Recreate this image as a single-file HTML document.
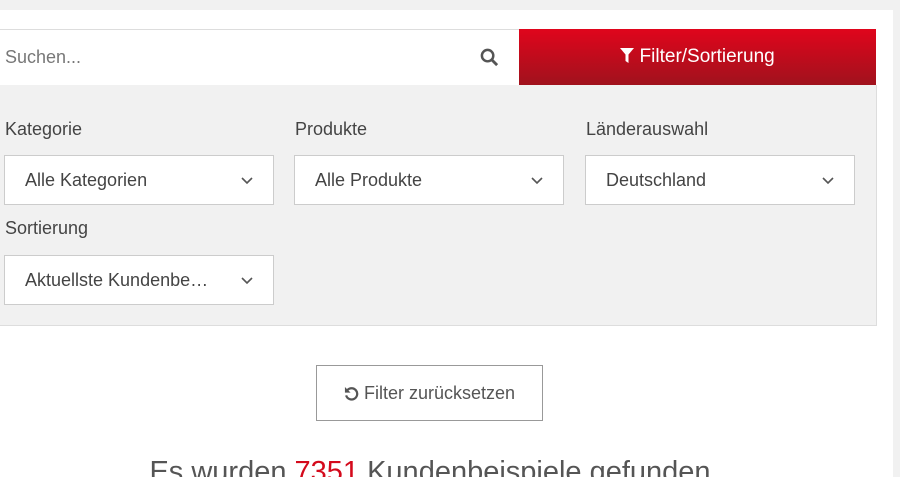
<!DOCTYPE html><html><head><style>
html,body{margin:0;width:900px;height:477px;overflow:hidden}
body{background:#f1f1f1;font-family:"Liberation Sans",sans-serif;color:#444;position:relative}
.white{position:absolute;left:0;top:10px;width:893px;height:467px;background:#fff}
.search{position:absolute;left:-1px;top:29px;width:520px;height:55px;border:1px solid #ddd;border-right:none;background:#fff}
.search span{position:absolute;left:5px;top:17px;font-size:18px;color:#777}
.btn{position:absolute;left:519px;top:29px;width:357px;height:56px;background:linear-gradient(#e0051c,#a0121d);color:#fff;font-size:19px;text-align:center;line-height:56px}
.panel{position:absolute;left:-1px;top:85px;width:876px;height:240px;background:#f1f1f1;border:1px solid #ddd;border-top:none}
.lbl{position:absolute;font-size:18px;color:#444}
.sel{position:absolute;width:270px;height:50px;background:#fff;border:1px solid #ccc;box-sizing:border-box;font-size:18px;line-height:48px;padding-left:20px;color:#444}
.sel svg{position:absolute;right:20px;top:21px}
.reset{position:absolute;left:316px;top:365px;width:227px;height:56px;border:1px solid #999;box-sizing:border-box;font-size:18px;line-height:54px;text-align:center;color:#555}
.h{position:absolute;left:0;width:860px;top:456px;text-align:center;font-size:29px;color:#555}
</style></head><body>
<div class="white"></div>
<div class="search"><span>Suchen...</span>
<svg style="position:absolute;left:480px;top:18px" width="19" height="19" viewBox="0 0 20 20"><circle cx="8" cy="8" r="6" fill="none" stroke="#555" stroke-width="2.6"/><line x1="12.5" y1="12.5" x2="18" y2="18" stroke="#555" stroke-width="3"/></svg></div>
<div class="btn"><svg width="14" height="15" viewBox="0 0 14 15" style="vertical-align:-1px"><path d="M0 0H14L8.5 6.5V15L5.5 13V6.5Z" fill="#fff"/></svg> Filter/Sortierung</div>
<div class="panel"></div>
<div class="lbl" style="left:5px;top:119px">Kategorie</div>
<div class="lbl" style="left:295px;top:119px">Produkte</div>
<div class="lbl" style="left:586px;top:119px">Länderauswahl</div>
<div class="lbl" style="left:5px;top:218px">Sortierung</div>
<div class="sel" style="left:4px;top:155px">Alle Kategorien<svg width="12" height="8" viewBox="0 0 12 8"><path d="M1 1L6 6L11 1" fill="none" stroke="#555" stroke-width="1.6"/></svg></div>
<div class="sel" style="left:294px;top:155px">Alle Produkte<svg width="12" height="8" viewBox="0 0 12 8"><path d="M1 1L6 6L11 1" fill="none" stroke="#555" stroke-width="1.6"/></svg></div>
<div class="sel" style="left:585px;top:155px">Deutschland<svg width="12" height="8" viewBox="0 0 12 8"><path d="M1 1L6 6L11 1" fill="none" stroke="#555" stroke-width="1.6"/></svg></div>
<div class="sel" style="left:4px;top:255px">Aktuellste Kundenbe…<svg width="12" height="8" viewBox="0 0 12 8"><path d="M1 1L6 6L11 1" fill="none" stroke="#555" stroke-width="1.6"/></svg></div>
<div class="reset"><svg width="15" height="15" viewBox="0 0 16 16" style="vertical-align:-2px"><path d="M3.5 4.5A6 6 0 1 1 2.3 10" fill="none" stroke="#555" stroke-width="2.4"/><path d="M1 1V7H7Z" fill="#555"/></svg> Filter zurücksetzen</div>
<div class="h">Es wurden <span style="color:#d40a1c">7351</span> Kundenbeispiele gefunden</div>
</body></html>
